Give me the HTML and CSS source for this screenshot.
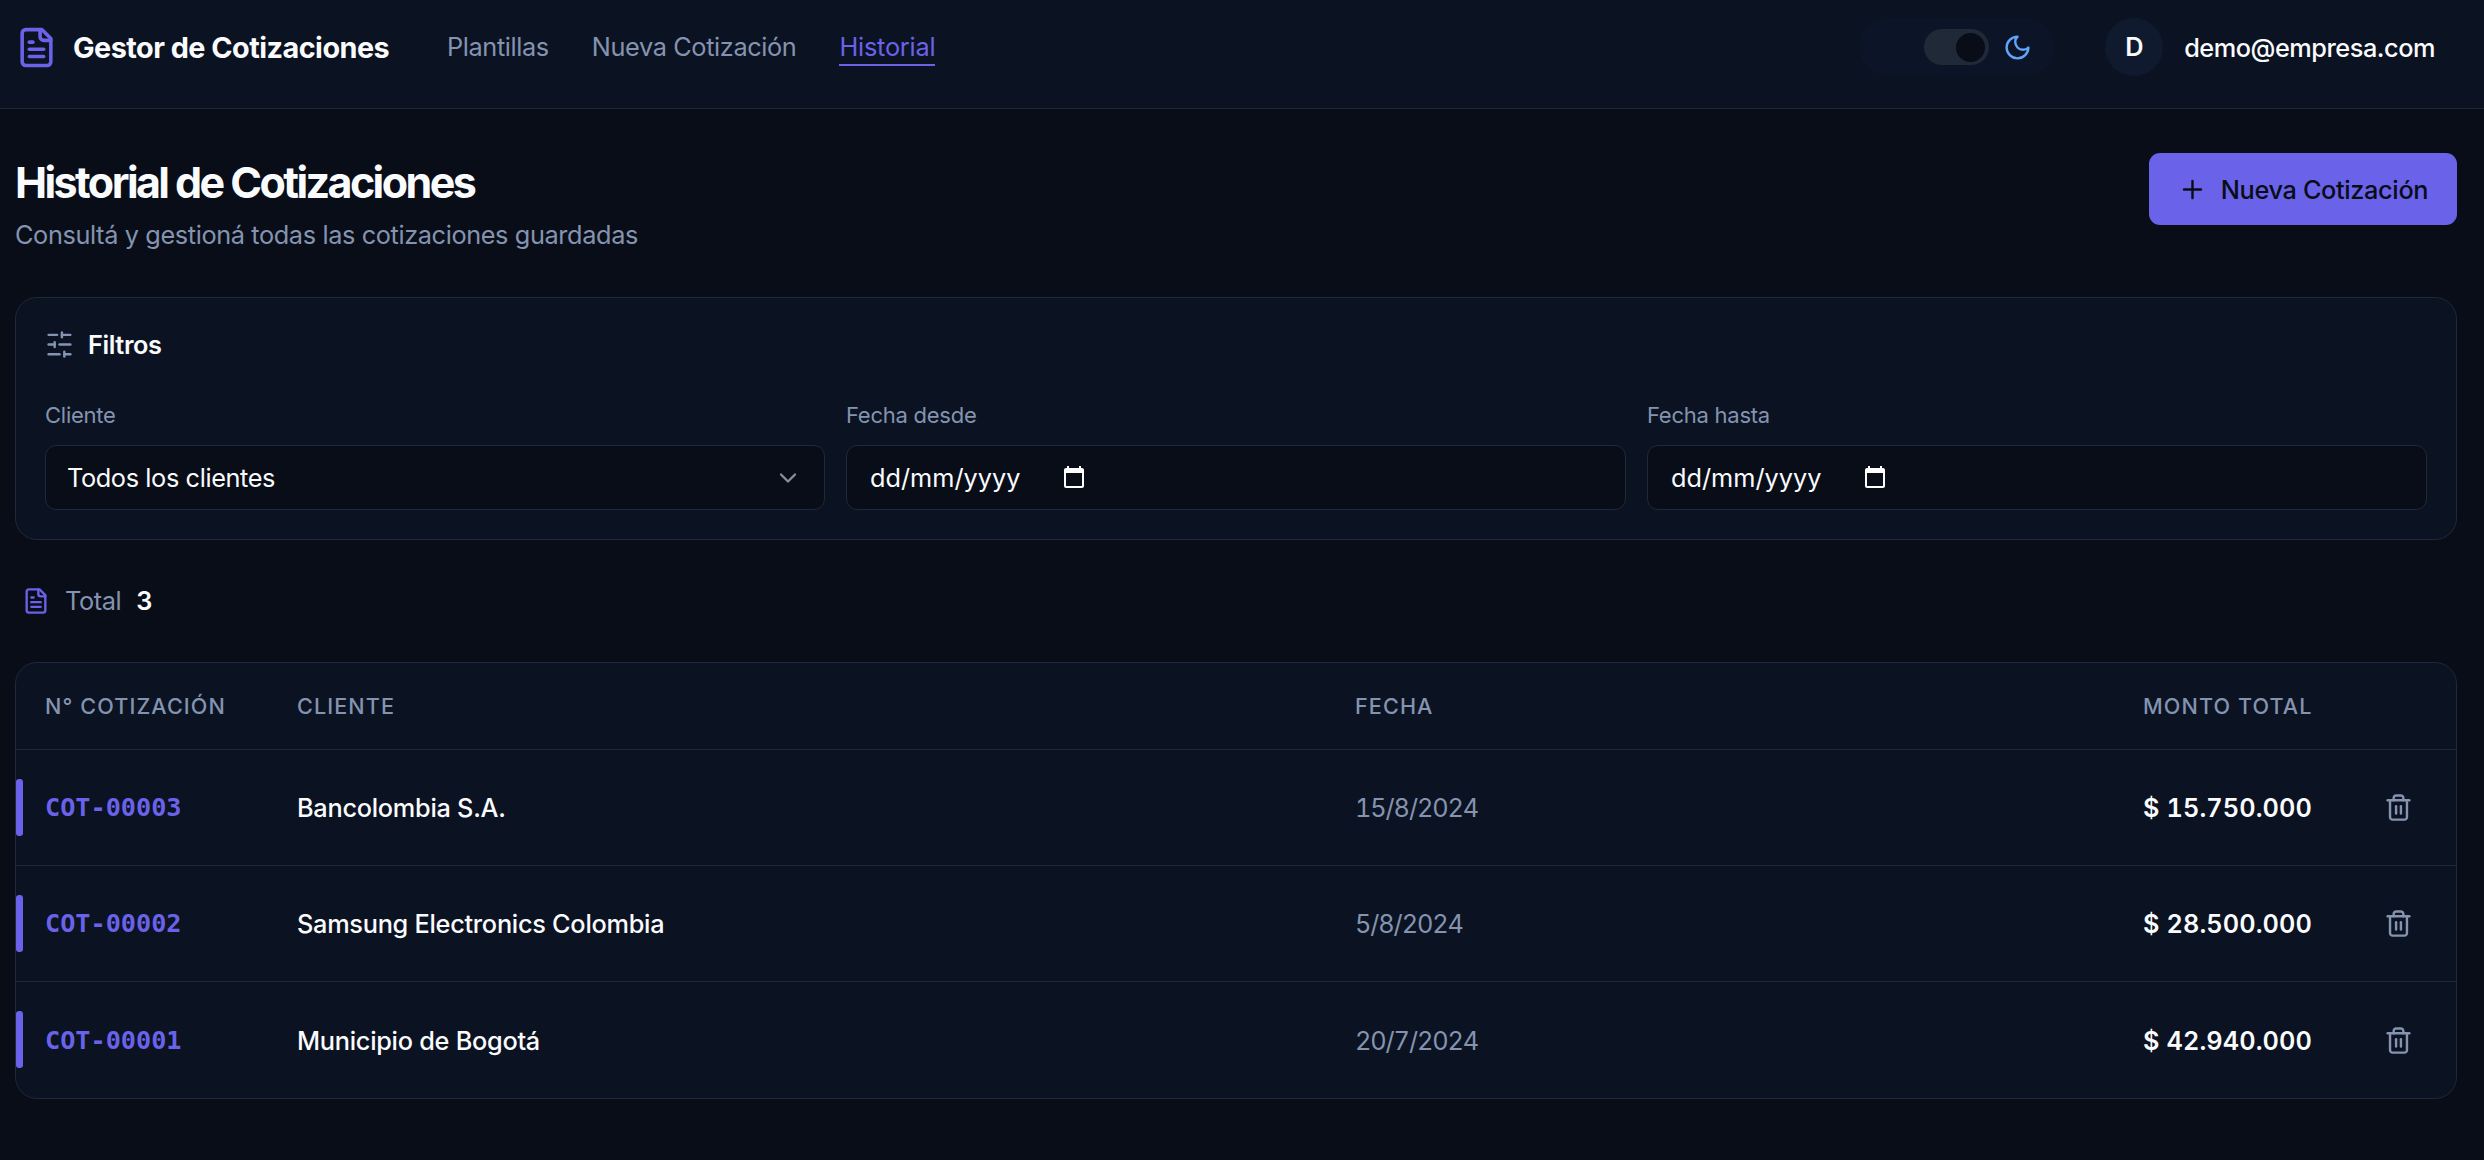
FILE: index.html
```html
<!DOCTYPE html>
<html lang="es">
<head>
  <meta charset="UTF-8" />
  <meta name="viewport" content="width=device-width, initial-scale=1.0"/>
  <title>Gestor de Cotizaciones</title>
  <link rel="stylesheet" href="styles.css">
</head>
<body>
  <!-- Icons -->
  <svg class="sprite" aria-hidden="true">
    <symbol id="icon-file" viewBox="0 0 24 24">
      <path d="M15 2H6a2 2 0 0 0-2 2v16a2 2 0 0 0 2 2h12a2 2 0 0 0 2-2V7Z"/>
      <path d="M14 2v4a2 2 0 0 0 2 2h4"/>
      <path d="M10 9H8"/>
      <path d="M16 13H8"/>
      <path d="M16 17H8"/>
    </symbol>
    <symbol id="icon-trash" viewBox="0 0 24 24">
      <path d="M3 6h18"/>
      <path d="M19 6v14c0 1-1 2-2 2H7c-1 0-2-1-2-2V6"/>
      <path d="M8 6V4c0-1 1-2 2-2h4c1 0 2 1 2 2v2"/>
      <path d="M10 11v6"/>
      <path d="M14 11v6"/>
    </symbol>
    <symbol id="icon-calendar" viewBox="0 0 24 24">
      <path d="M20 3h-1V1h-2v2H7V1H5v2H4c-1.100 0-2 .9-2 2v16c0 1.100.9 2 2 2h16c1.100 0 2-.9 2-2V5c0-1.100-.9-2-2-2zm0 18H4V8h16v13z"/>
    </symbol>
  </svg>

  <header class="navbar">
    <div class="brand">
      <svg class="icon brand-icon"><use href="#icon-file"/></svg>
      <span>Gestor de Cotizaciones</span>
    </div>
    <nav class="nav-links">
      <a href="#">Plantillas</a>
      <a href="#">Nueva Cotización</a>
      <a href="#" class="active">Historial</a>
    </nav>
    <div class="theme-toggle">
      <div class="switch"><span class="knob"></span></div>
      <svg class="icon moon" viewBox="0 0 24 24"><path d="M12 3a6 6 0 0 0 9 9 9 9 0 1 1-9-9Z"/></svg>
    </div>
    <div class="user">
      <span class="avatar">D</span>
      <span class="email">demo@empresa.com</span>
    </div>
  </header>

  <main>
    <div class="page-head">
      <div>
        <h1>Historial de Cotizaciones</h1>
        <p class="subtitle">Consultá y gestioná todas las cotizaciones guardadas</p>
      </div>
      <button class="btn-new">
        <svg class="icon" viewBox="0 0 24 24"><path d="M5 12h14"/><path d="M12 5v14"/></svg>
        <span>Nueva Cotización</span>
      </button>
    </div>

    <section class="card filters">
      <h2>
        <svg class="icon" viewBox="0 0 24 24">
          <path d="M21 4h-7"/><path d="M10 4H3"/><path d="M21 12h-9"/><path d="M8 12H3"/><path d="M21 20h-5"/><path d="M12 20H3"/>
          <path d="M14 2v4"/><path d="M8 10v4"/><path d="M16 18v4"/>
        </svg>
        <span>Filtros</span>
      </h2>
      <div class="filter-grid">
        <div class="field">
          <label>Cliente</label>
          <div class="control select">
            <span>Todos los clientes</span>
            <svg class="icon chevron" viewBox="0 0 24 24"><path d="m6 9 6 6 6-6"/></svg>
          </div>
        </div>
        <div class="field">
          <label>Fecha desde</label>
          <div class="control date">
            <span>dd/mm/yyyy</span>
            <svg class="calendar"><use href="#icon-calendar"/></svg>
          </div>
        </div>
        <div class="field">
          <label>Fecha hasta</label>
          <div class="control date">
            <span>dd/mm/yyyy</span>
            <svg class="calendar"><use href="#icon-calendar"/></svg>
          </div>
        </div>
      </div>
    </section>

    <div class="total">
      <svg class="icon"><use href="#icon-file"/></svg>
      <span>Total</span>
      <strong>3</strong>
    </div>

    <section class="card quotes">
      <div class="row head">
        <span>N° Cotización</span>
        <span>Cliente</span>
        <span>Fecha</span>
        <span>Monto total</span>
      </div>
      <div class="row">
        <span class="code">COT-00003</span>
        <span class="client">Bancolombia S.A.</span>
        <span class="date-cell">15/8/2024</span>
        <span class="amount">$ 15.750.000</span>
        <svg class="icon trash"><use href="#icon-trash"/></svg>
      </div>
      <div class="row">
        <span class="code">COT-00002</span>
        <span class="client">Samsung Electronics Colombia</span>
        <span class="date-cell">5/8/2024</span>
        <span class="amount">$ 28.500.000</span>
        <svg class="icon trash"><use href="#icon-trash"/></svg>
      </div>
      <div class="row">
        <span class="code">COT-00001</span>
        <span class="client">Municipio de Bogotá</span>
        <span class="date-cell">20/7/2024</span>
        <span class="amount">$ 42.940.000</span>
        <svg class="icon trash"><use href="#icon-trash"/></svg>
      </div>
    </section>
  </main>
</body>
</html>
```
FILE: styles.css
```css
* {
  box-sizing: border-box;
  margin: 0;
  padding: 0;
}

:root {
  --bg: #090d18;
  --card: #0b1221;
  --border: #1e293b;
  --text: #fafbfd;
  --muted: #8494b0;
  --primary: #6a62e8;
}

body {
  background: var(--bg);
  color: var(--text);
  font-family: Inter, sans-serif;
  font-size: 25.3px;
  letter-spacing: -0.38px;
  min-height: 100vh;
  overflow: hidden;
}

.sprite {
  display: none;
}

.icon {
  fill: none;
  stroke: currentColor;
  stroke-width: 2;
  stroke-linecap: round;
  stroke-linejoin: round;
  flex-shrink: 0;
}

/* Navbar */
.navbar {
  display: flex;
  align-items: center;
  height: 109px;
  padding: 0 49px 14px 15px;
  background: var(--card);
  border-bottom: 1px solid var(--border);
}

.brand {
  display: flex;
  align-items: center;
  gap: 15px;
  width: 432px;
  font-size: 28.8px;
  font-weight: 700;
  letter-spacing: -0.52px;
  white-space: nowrap;
}

.brand-icon {
  width: 43px;
  height: 43px;
  color: var(--primary);
}

.nav-links {
  display: flex;
  gap: 43px;
  flex: 1;
  letter-spacing: -0.38px;
}

.nav-links a {
  color: var(--muted);
  text-decoration: none;
  line-height: 34px;
  padding-top: 1px;
  border-bottom: 2px solid transparent;
}

.nav-links a.active {
  color: var(--primary);
  border-color: var(--primary);
  letter-spacing: -0.2px;
}

.theme-toggle {
  display: flex;
  align-items: center;
  justify-content: flex-end;
  gap: 14px;
  width: 196px;
  height: 58px;
  padding-right: 23px;
  margin-right: 50px;
  border-radius: 29px;
  background: #0c1527;
}

.switch {
  display: flex;
  align-items: center;
  justify-content: flex-end;
  width: 65px;
  height: 36px;
  padding: 4px;
  border-radius: 18px;
  background: #1f2937;
}

.knob {
  width: 29px;
  height: 29px;
  border-radius: 50%;
  background: var(--bg);
}

.moon {
  width: 29px;
  height: 29px;
  color: #60a5fa;
}

.user {
  display: flex;
  align-items: center;
  gap: 21px;
  font-weight: 500;
}

.email {
  letter-spacing: -0.46px;
}

.avatar {
  width: 58px;
  height: 58px;
  border-radius: 50%;
  background: #0f1a2e;
  line-height: 58px;
  text-align: center;
  font-weight: 600;
}

/* Page header */
main {
  padding: 43px 27px 0 15px;
}

.page-head {
  display: flex;
  justify-content: space-between;
  align-items: flex-start;
  height: 145px;
}

h1 {
  font-size: 43px;
  line-height: 60px;
  font-weight: 700;
  letter-spacing: -2.58px;
}

.subtitle {
  color: var(--muted);
  line-height: 36px;
  margin-top: 5px;
}

.btn-new {
  display: flex;
  align-items: center;
  justify-content: center;
  gap: 14px;
  width: 308px;
  height: 72px;
  margin-top: 1px;
  border: none;
  border-radius: 11px;
  background: var(--primary);
  color: var(--bg);
  font-family: inherit;
  font-size: 25.3px;
  font-weight: 500;
  letter-spacing: -0.35px;
}

.btn-new .icon {
  width: 29px;
  height: 29px;
}

.card {
  background: var(--card);
  border: 1px solid var(--border);
  border-radius: 22px;
}

/* Filters */
.filters {
  height: 243px;
  padding: 28px 29px 0;
}

h2 {
  display: flex;
  align-items: center;
  gap: 14px;
  height: 36px;
  font-size: 25.3px;
  font-weight: 600;
}

h2 .icon {
  width: 29px;
  height: 29px;
  color: var(--muted);
}

.filter-grid {
  display: grid;
  grid-template-columns: repeat(3, 1fr);
  gap: 21px;
  margin-top: 39px;
}

.field label {
  display: block;
  color: var(--muted);
  font-size: 22px;
  line-height: 29px;
  letter-spacing: -0.25px;
}

.control {
  display: flex;
  align-items: center;
  height: 65px;
  margin-top: 15px;
  padding: 0 23px;
  border: 1px solid var(--border);
  border-radius: 11px;
  background: var(--bg);
}

.select {
  justify-content: space-between;
  padding: 0 22px 0 21px;
}

.date {
  letter-spacing: 0;
}

.chevron {
  width: 28px;
  height: 28px;
  color: #8b8e95;
}

.calendar {
  width: 24px;
  height: 24px;
  margin: 0 0 2px 42px;
  fill: #fff;
}

.total {
  display: flex;
  align-items: center;
  gap: 15px;
  height: 122px;
  padding: 0 0 1px 7px;
  color: var(--muted);
}

.total .icon {
  width: 28px;
  height: 28px;
  color: var(--primary);
}

.total strong {
  color: var(--text);
  font-weight: 600;
}

/* Quotes table */
.row {
  display: grid;
  grid-template-columns: 252px 1058px 788px 241px 1fr;
  align-items: center;
  position: relative;
  height: 116px;
  padding: 0 29px;
  border-top: 1px solid var(--border);
}

.row:last-child {
  height: 117px;
}

.row.head {
  height: 86px;
  border-top: none;
  color: var(--muted);
  font-size: 21.6px;
  font-weight: 500;
  letter-spacing: 1.1px;
  text-transform: uppercase;
}

.row:not(.head)::before {
  content: "";
  position: absolute;
  left: 0;
  top: 29px;
  width: 7px;
  height: 57px;
  border-radius: 3px;
  background: var(--primary);
}

.code {
  font-family: "DejaVu Sans Mono", monospace;
  font-weight: 700;
  font-size: 25.2px;
  letter-spacing: 0;
  color: var(--primary);
}

.client {
  font-weight: 500;
  letter-spacing: -0.27px;
}

.date-cell {
  color: var(--muted);
  font-variant-numeric: tabular-nums;
  letter-spacing: -1.1px;
}

.amount {
  font-weight: 600;
  font-variant-numeric: tabular-nums;
  letter-spacing: 0.1px;
}

.trash {
  width: 29px;
  height: 29px;
  color: var(--muted);
}
```
